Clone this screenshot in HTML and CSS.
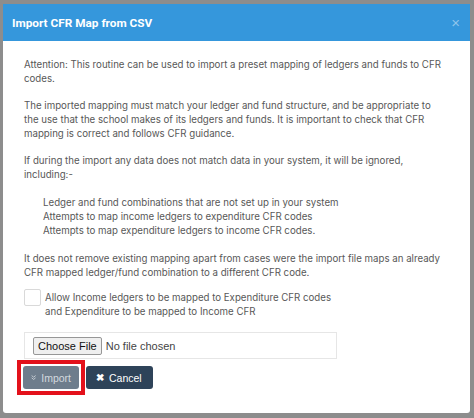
FILE: index.html
```html
<!DOCTYPE html>
<html>
<head>
<meta charset="utf-8">
<link rel="stylesheet" href="styles.css">
</head>
<body>
<div class="modal">
  <div class="modal-header">
    <span class="modal-title">Import CFR Map from CSV</span>
    <span class="modal-close">&times;</span>
  </div>
  <div class="modal-body">
    <p>Attention: This routine can be used to import a preset mapping of ledgers and funds to CFR codes.</p>
    <p>The imported mapping must match your ledger and fund structure, and be appropriate to the use that the school makes of its ledgers and funds. It is important to check that CFR mapping is correct and follows CFR guidance.</p>
    <p class="before-list">If during the import any data does not match data in your system, it will be ignored, including:-</p>
    <ul class="rules">
      <li>Ledger and fund combinations that are not set up in your system</li>
      <li>Attempts to map income ledgers to expenditure CFR codes</li>
      <li>Attempts to map expenditure ledgers to income CFR codes.</li>
    </ul>
    <p>It does not remove existing mapping apart from cases were the import file maps an already CFR mapped ledger/fund combination to a different CFR code.</p>
    <label class="check-row">
      <span class="check-box"></span>
      <span class="check-label">Allow Income ledgers to be mapped to Expenditure CFR codes<br>and Expenditure to be mapped to Income CFR</span>
    </label>
    <div class="file-box">
      <span class="file-btn">Choose File</span>
      <span class="file-none">No file chosen</span>
    </div>
    <div class="actions">
      <span class="highlight">
        <button class="btn btn-import">
          <svg class="ico-dd" viewBox="0 0 8 8" width="7" height="7"><path d="M1 1 L4 3.5 L7 1 M1 4.5 L4 7 L7 4.5" fill="none" stroke="currentColor" stroke-width="1.3"/></svg>
          Import
        </button>
      </span>
      <button class="btn btn-cancel"><span class="ico-x">&#10006;</span> Cancel</button>
    </div>
  </div>
</div>
</body>
</html>
```

FILE: styles.css
```css
html, body {
  margin: 0;
  padding: 0;
}
body {
  background: #8d8d8d;
  height: 418px;
  overflow: hidden;
  font-family: Inter, "Noto Sans", sans-serif;
}
.modal {
  margin: 4px 4px 0 3px;
  width: 467px;
  background: #fff;
  border-radius: 0 0 3px 3px;
}
.modal-header {
  height: 37px;
  background: #3597dc;
  display: flex;
  align-items: center;
  justify-content: space-between;
  padding: 0 10px 0 9px;
}
.modal-title {
  font-family: Roboto, "Liberation Sans", sans-serif;
  font-weight: 700;
  font-size: 11.8px;
  color: #fff;
}
.modal-close {
  font-size: 15px;
  color: rgba(255, 255, 255, 0.45);
  font-family: "Liberation Sans", sans-serif;
}
.modal-body {
  padding: 17px 24px 18px 18px;
  font-size: 9.7px;
  line-height: 14px;
  color: #585858;
}
.modal-body p {
  margin: 0 0 13px 0;
  padding-left: 3px;
}
.modal-body p.before-list {
  margin-bottom: 14px;
}
.rules {
  list-style: none;
  margin: 0 0 14px 0;
  padding: 0 0 0 22px;
}
.check-row {
  display: flex;
  align-items: flex-start;
  gap: 4px;
  margin-top: -2px;
}
.check-box {
  width: 15px;
  height: 15px;
  border: 1px solid #d9d9d9;
  border-radius: 2px;
  margin-top: -2px;
  flex: none;
  margin-left: 3px;
}
.file-box {
  margin: 13px 0 0 3px;
  width: 303px;
  height: 25px;
  border: 1px solid #e6e6e6;
  display: flex;
  align-items: center;
  padding-left: 8px;
  gap: 4px;
  font-family: "Liberation Sans", sans-serif;
  font-size: 11px;
}
.file-btn {
  background: #efefef;
  border: 1px solid #979797;
  border-radius: 2px;
  padding: 2px 4px;
  color: #111;
  line-height: 12px;
}
.file-none {
  color: #444;
}
.actions {
  display: flex;
  align-items: center;
  margin: 1px 0 0 -4px;
}
.highlight {
  display: block;
  border: 4px solid #e3111b;
  padding: 2px;
}
.btn {
  height: 23px;
  border: none;
  border-radius: 3px;
  font-family: "Liberation Sans", sans-serif;
  font-size: 10.5px;
  display: flex;
  align-items: center;
  gap: 5px;
}
.btn-import {
  width: 56px;
  background: #6e7d8c;
  color: #d3d9df;
  padding: 0 8px;
}
.btn-cancel {
  width: 67px;
  margin-left: 1px;
  background: #2e4359;
  color: #fff;
  padding: 0 10px;
}
.ico-x {
  font-size: 10px;
  font-weight: bold;
}
```
